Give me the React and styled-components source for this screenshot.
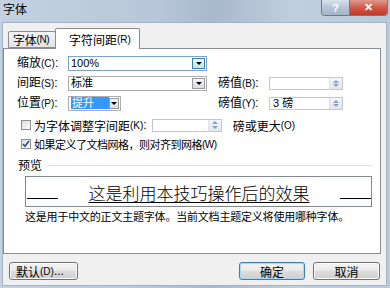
import React from 'react'
import styled, { createGlobalStyle } from 'styled-components'

const GlobalStyle = createGlobalStyle`
  html, body {
    margin: 0;
    padding: 0;
    background: #c9d6e4;
  }
  body {
    font-family: "Liberation Sans", "Noto Sans CJK SC", sans-serif;
    font-size: 12px;
    color: #000;
  }
`

const Window = styled.div`
  width: 390px;
  height: 288px;
  overflow: hidden;
  display: flex;
  flex-direction: column;
  background: linear-gradient(90deg, #c3d1e0 0%, #b7c7d9 40%, #a9b9cc 55%, #c0cfdf 75%, #b9c9db 100%);
`

const TitleBar = styled.div`
  height: 22px;
  flex: 0 0 22px;
  display: flex;
  align-items: flex-start;
  justify-content: space-between;
  padding-left: 3px;
`

const Title = styled.div`
  font-size: 12px;
  line-height: 12px;
  padding-top: 4px;
`

const Caption = styled.div`
  display: flex;
  margin-right: 2px;
  height: 15px;
  border: 1px solid #6b7a8c;
  border-top: none;
  border-radius: 0 0 4px 4px;
  overflow: hidden;
`

const CapButton = styled.div`
  width: ${p => p.$w}px;
  height: 15px;
  display: flex;
  align-items: center;
  justify-content: center;
  color: #fff;
  font-size: 11px;
  font-weight: bold;
  background: ${p => p.$red
    ? 'linear-gradient(#e09a8e 0%, #cf5a48 50%, #c23a26 100%)'
    : 'linear-gradient(#d8e1ec 0%, #b6c4d6 50%, #a4b4c8 100%)'};
  & + & {
    border-left: 1px solid #6b7a8c;
  }
`

const Body = styled.div`
  flex: 1;
  margin: 0 3px 2px 2px;
  background: #f0f0f0;
  border: 1px solid #a5b2c1;
  display: flex;
  flex-direction: column;
`

const TabStrip = styled.div`
  display: flex;
  align-items: flex-end;
  padding: 4px 0 0 5px;
  height: 21px;
`

const Tab = styled.div`
  position: relative;
  display: flex;
  align-items: center;
  box-sizing: border-box;
  width: ${p => p.$w}px;
  height: ${p => (p.$active ? 21 : 17)}px;
  padding-left: ${p => p.$pl}px;
  margin-bottom: ${p => (p.$active ? -1 : 0)}px;
  background: ${p => (p.$active ? '#fff' : 'linear-gradient(#f4f4f4, #e4e4e4)')};
  border: 1px solid #898c95;
  border-bottom: ${p => (p.$active ? 'none' : '1px solid #898c95')};
  border-radius: 2px 2px 0 0;
  z-index: ${p => (p.$active ? 2 : 1)};
  margin-left: ${p => (p.$active ? -1 : 0)}px;
  font-size: 12px;
  letter-spacing: ${p => (p.$active ? 0 : -0.3)}px;
  white-space: nowrap;
`

const Key = styled.span`
  font-size: 10px;
`

const Panel = styled.div`
  width: 376px;
  height: 204px;
  background: #fff;
  border: 1px solid #898c95;
  position: relative;
  z-index: 1;
`

const FieldGrid = styled.div`
  display: grid;
  grid-template-columns: 51px 139px 11px 51px 74px;
  grid-auto-rows: 15px;
  row-gap: 5px;
  padding: 7px 0 0 13px;
  align-items: center;
`

const Label = styled.div`
  font-size: 12px;
  line-height: 15px;
  white-space: nowrap;
  grid-column: ${p => p.$col || 'auto'};
`

const Combo = styled.div`
  grid-column: ${p => p.$col || 'auto'};
  width: ${p => p.$w}px;
  height: 15px;
  box-sizing: border-box;
  border: 1px solid ${p => (p.$focus ? '#7da2ce' : '#abadb3')};
  display: flex;
  align-items: center;
  background: #fff;
`

const ComboText = styled.div`
  flex: 1;
  padding-left: 2px;
  font-size: 11px;
  line-height: 13px;
  white-space: nowrap;
`

const Selected = styled.span`
  background: #3399ff;
  color: #fff;
  padding: 0 15px 0 1px;
  font-size: 11px;
`

const DropButton = styled.div`
  width: 13px;
  height: 11px;
  margin-right: 1px;
  box-sizing: border-box;
  border: 1px solid ${p => (p.$hot ? '#3c7fb1' : '#9a9a9a')};
  background: ${p => (p.$hot ? 'linear-gradient(#eaf6fd, #bee6fd)' : 'linear-gradient(#f6f6f6, #dcdcdc)')};
  display: flex;
  align-items: center;
  justify-content: center;
  &::after {
    content: '';
    border-left: 3px solid transparent;
    border-right: 3px solid transparent;
    border-top: 3px solid #000;
  }
`

const SpinField = styled.div`
  grid-column: ${p => p.$col || 'auto'};
  width: ${p => p.$w}px;
  height: 13px;
  box-sizing: border-box;
  border: 1px solid #c3c7cf;
  display: flex;
  align-items: center;
  background: #fff;
`

const SpinText = styled.div`
  flex: 1;
  padding-left: 3px;
  font-size: 11px;
  line-height: 11px;
`

const Spinner = styled.div`
  width: 13px;
  height: 11px;
  box-sizing: border-box;
  border-left: 1px solid #dde1e7;
  background: linear-gradient(#f3f6fa, #e1e7ef);
  display: flex;
  flex-direction: column;
  align-items: center;
  justify-content: space-evenly;
  &::before {
    content: '';
    border-left: 3px solid transparent;
    border-right: 3px solid transparent;
    border-bottom: 3px solid #8aa0bd;
  }
  &::after {
    content: '';
    border-left: 3px solid transparent;
    border-right: 3px solid transparent;
    border-top: 3px solid #8aa0bd;
  }
`

const CheckRow = styled.div`
  display: flex;
  align-items: center;
  height: 14px;
  padding-left: 17px;
  margin-top: ${p => p.$top}px;
  font-size: ${p => p.$size || 12}px;
  letter-spacing: ${p => p.$ls || 0}px;
  white-space: nowrap;
`

const Check = styled.div`
  width: 10px;
  height: 10px;
  box-sizing: border-box;
  border: 1px solid #8f8f8f;
  background: linear-gradient(135deg, #dcdcdc, #fdfdfd);
  margin-right: 3px;
  display: flex;
  align-items: center;
  justify-content: center;
`

const Inline = styled.div`
  margin-left: ${p => p.$ml || 0}px;
  display: flex;
  align-items: center;
`

const PreviewHead = styled.div`
  display: flex;
  align-items: center;
  margin: 6px 8px 0 14px;
  height: 14px;
  &::after {
    content: '';
    flex: 1;
    height: 1px;
    margin-left: 6px;
    margin-top: 2px;
    background: #dcdfe3;
  }
`

const PreviewBox = styled.div`
  margin: 5px 8px 0 21px;
  height: 31px;
  box-sizing: border-box;
  border: 1px solid #828790;
  display: flex;
  align-items: flex-end;
  padding: 0 0 7px 1px;
`

const Rule = styled.div`
  width: 31px;
  height: 1px;
  background: #000;
`

const PreviewText = styled.div`
  flex: 1;
  text-align: center;
  font-size: 17px;
  line-height: 20px;
  margin-bottom: -4px;
  text-decoration: underline;
  text-decoration-thickness: 1px;
  text-underline-offset: 2px;
  font-family: "Noto Sans CJK SC", sans-serif;
  font-weight: 300;
`

const Note = styled.div`
  margin: 4px 0 0 21px;
  font-size: 11px;
  line-height: 13px;
  letter-spacing: -0.2px;
  white-space: nowrap;
`

const ButtonRow = styled.div`
  display: flex;
  align-items: center;
  padding: 8px 6px 0 6px;
`

const Button = styled.div`
  width: ${p => p.$w}px;
  height: 18px;
  box-sizing: border-box;
  border: 1px solid ${p => (p.$default ? '#3c7fb1' : '#707070')};
  border-radius: 3px;
  background: linear-gradient(#f2f2f2 0%, #ebebeb 45%, #dddddd 50%, #cfcfcf 100%);
  box-shadow: ${p => (p.$default ? 'inset 0 0 0 1px #a8d8f5' : 'inset 0 0 0 1px #fcfcfc')};
  display: flex;
  align-items: center;
  justify-content: ${p => (p.$left ? 'flex-start' : 'center')};
  padding-left: ${p => (p.$left ? 6 : 0)}px;
  margin-left: ${p => p.$ml || 0}px;
  font-size: 12px;
`

const Spacer = styled.div`
  flex: 1;
`

const CheckMark = () => (
  <svg width="8" height="8" viewBox="0 0 8 8">
    <path d="M1 4 L3 6.3 L7 1" fill="none" stroke="#2b4f8a" strokeWidth="1.6" />
  </svg>
)

export default function App() {
  return (
    <>
      <GlobalStyle />
      <Window>
        <TitleBar>
          <Title>字体</Title>
          <Caption>
            <CapButton $w={27}>?</CapButton>
            <CapButton $w={37} $red>✕</CapButton>
          </Caption>
        </TitleBar>
        <Body>
          <TabStrip>
            <Tab $w={48} $pl={4}>字体<Key>(N)</Key></Tab>
            <Tab $active $w={85} $pl={13}>字符间距<Key>(R)</Key></Tab>
          </TabStrip>
          <Panel>
            <FieldGrid>
              <Label>缩放<Key>(C)</Key>:</Label>
              <Combo $w={139} $focus>
                <ComboText>100%</ComboText>
                <DropButton $hot />
              </Combo>
              <Label $col="1">间距<Key>(S)</Key>:</Label>
              <Combo $w={139}>
                <ComboText>标准</ComboText>
                <DropButton />
              </Combo>
              <Label $col="4">磅值<Key>(B)</Key>:</Label>
              <SpinField $w={74}>
                <SpinText />
                <Spinner />
              </SpinField>
              <Label $col="1">位置<Key>(P)</Key>:</Label>
              <Combo $w={53}>
                <ComboText><Selected>提升</Selected></ComboText>
                <DropButton />
              </Combo>
              <Label $col="4">磅值<Key>(Y)</Key>:</Label>
              <SpinField $w={74}>
                <SpinText>3 磅</SpinText>
                <Spinner />
              </SpinField>
            </FieldGrid>
            <CheckRow $top={7}>
              <Check />
              为字体调整字间距<Key>(K)</Key>:
              <Inline $ml={5}>
                <SpinField $w={70}>
                  <SpinText />
                  <Spinner />
                </SpinField>
              </Inline>
              <Inline $ml={11}>磅或更大<Key>(O)</Key></Inline>
            </CheckRow>
            <CheckRow $top={5} $size={11} $ls={-0.5}>
              <Check><CheckMark /></Check>
              如果定义了文档网格，则对齐到网格<Key>(W)</Key>
            </CheckRow>
            <PreviewHead>预览</PreviewHead>
            <PreviewBox>
              <Rule />
              <PreviewText>这是利用本技巧操作后的效果</PreviewText>
              <Rule />
            </PreviewBox>
            <Note>这是用于中文的正文主题字体。当前文档主题定义将使用哪种字体。</Note>
          </Panel>
          <ButtonRow>
            <Button $w={69} $left>默认<Key>(D)</Key>...</Button>
            <Spacer />
            <Button $w={66} $default>确定</Button>
            <Button $w={67} $ml={8}>取消</Button>
          </ButtonRow>
        </Body>
      </Window>
    </>
  )
}
